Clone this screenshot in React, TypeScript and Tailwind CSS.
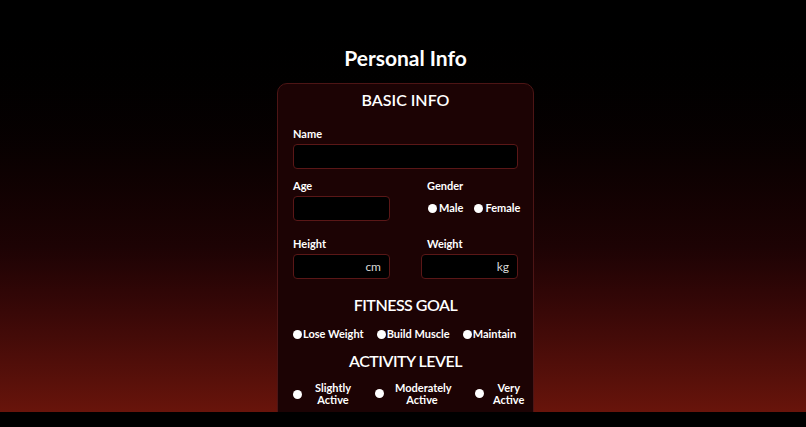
function Dot() {
  return <span className="inline-block w-[9px] h-[9px] rounded-full bg-white shrink-0" />;
}

function Field({ label, unit, className }: { label: string; unit?: string; className?: string }) {
  return (
    <div className={className}>
      <div className="text-[11px] font-bold leading-[12px] mb-[4px]">{label}</div>
      <div className="h-[25px] bg-black border border-[#5a1717] rounded-[4px] flex items-center justify-end pr-[8px] text-[12px] text-[#d8d8d8]">
        {unit}
      </div>
    </div>
  );
}

export default function App() {
  return (
    <div className="w-[806px] h-[427px] flex flex-col bg-black text-white overflow-hidden" style={{ fontFamily: 'Lato, "Noto Sans", sans-serif' }}>
      <main className="h-[412px] shrink-0 overflow-hidden bg-gradient-to-b from-black via-[#1d0304] via-60% to-[#68140b] flex flex-col items-center pl-[5px]">
        <h1 className="mt-[44px] text-[21px] font-bold leading-[28px]">Personal Info</h1>
        <section className="mt-[11px] w-[257px] shrink-0 bg-[#1c0304] border border-[#4d1515] rounded-[10px] px-[15px] pt-[5px] pb-[20px] whitespace-nowrap">
          <h2 className="text-center text-[16px] font-semibold leading-[22px]">BASIC INFO</h2>

          <Field label="Name" className="mt-[17px]" />

          <div className="mt-[11px] flex">
            <Field label="Age" className="w-[97px] shrink-0" />
            <div className="ml-[37px]">
              <div className="text-[11px] font-bold leading-[12px]">Gender</div>
              <div className="mt-[9px] ml-[1px] flex gap-[11px] text-[11px] font-bold leading-[14px]">
                <label className="flex items-center gap-[2px]"><Dot />Male</label>
                <label className="flex items-center gap-[2px]"><Dot />Female</label>
              </div>
            </div>
          </div>

          <div className="mt-[17px] flex justify-between">
            <Field label="Height" unit="cm" className="w-[97px] shrink-0" />
            <div className="w-[97px] shrink-0">
              <div className="text-[11px] font-bold leading-[12px] mb-[4px] ml-[6px]">Weight</div>
              <div className="h-[25px] bg-black border border-[#5a1717] rounded-[4px] flex items-center justify-end pr-[8px] text-[12px] text-[#d8d8d8]">kg</div>
            </div>
          </div>

          <h2 className="mt-[15px] text-center text-[16px] font-semibold leading-[22px] tracking-[-0.5px]">FITNESS GOAL</h2>
          <div className="mt-[11px] flex gap-[13px] text-[11px] font-bold leading-[14px]">
            <label className="flex items-center gap-[1px]"><Dot />Lose Weight</label>
            <label className="flex items-center gap-[1px]"><Dot />Build Muscle</label>
            <label className="flex items-center gap-[1px]"><Dot />Maintain</label>
          </div>

          <h2 className="mt-[9px] text-center text-[16px] font-semibold leading-[22px] tracking-[-0.5px]">ACTIVITY LEVEL</h2>
          <div className="mt-[10px] flex items-center text-[11px] font-bold leading-[12px] text-center">
            <Dot />
            <span className="ml-[13px] w-[36px]">Slightly<br />Active</span>
            <span className="ml-[24px]"><Dot /></span>
            <span className="ml-[11px] w-[54px]">Moderately<br />Active</span>
            <span className="ml-[26px]"><Dot /></span>
            <span className="ml-[9px] w-[34px]">Very<br />Active</span>
          </div>
        </section>
      </main>
      <div className="h-[15px] bg-black" />
    </div>
  );
}
